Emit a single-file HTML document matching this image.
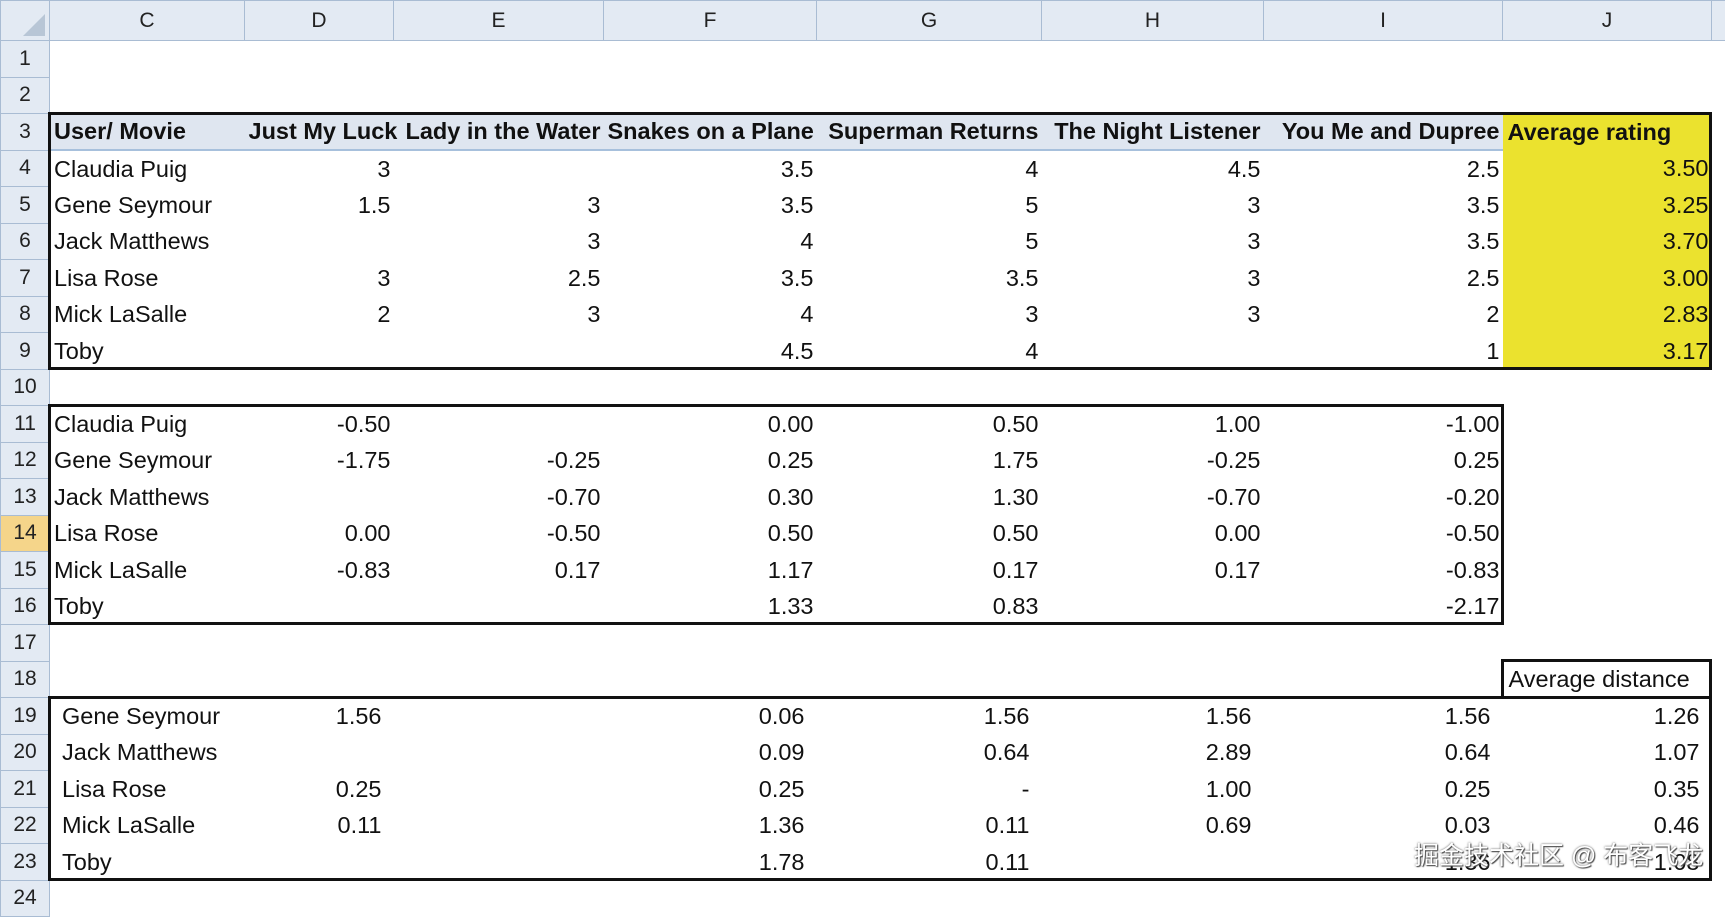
<!DOCTYPE html>
<html><head><meta charset="utf-8">
<style>
body{margin:0;width:1725px;height:889px;overflow:hidden;background:#fff;font-family:"Liberation Sans",Arial,sans-serif;position:relative}
table{border-collapse:collapse;table-layout:fixed;position:absolute;left:0;top:0;width:1725px}
td{padding:0 3px 0 4px;font-size:23.5px;color:#111;white-space:nowrap;overflow:visible;border:none;line-height:24px}
tr.r{height:36.5px}
td.h{background:#e3eaf3;border:1px solid #a9bcd3;text-align:center;color:#222;font-size:21px;padding:0}
tr.ch{height:40px}
.n{text-align:right}
.b{font-weight:bold}
tr.hd td.hb{background:#dfe6f0;border-bottom:2px solid #a7c0dc}
td.y, tr.hd td.y{background:#ebe22e}
.box{position:absolute;border:3px solid #111;box-sizing:border-box}
.in{padding-left:12px}
.nr{text-align:right;padding-right:12px}
.wm{position:absolute;left:1414px;top:836px;font-size:25px;color:#fff;font-family:"Liberation Sans","Noto Sans CJK SC",sans-serif;text-shadow:0 0 2px #555,1px 1px 1px #444}
</style></head><body>
<table>
<colgroup><col style="width:49px"><col style="width:195px"><col style="width:149px"><col style="width:210px"><col style="width:213px"><col style="width:225px"><col style="width:222px"><col style="width:239px"><col style="width:209px"><col style="width:14px"></colgroup>
<tr class="ch"><td class="h" style="position:relative"><div style="position:absolute;right:4px;bottom:4px;width:0;height:0;border-left:22px solid transparent;border-bottom:22px solid #b8c6d6"></div></td><td class="h">C</td><td class="h">D</td><td class="h">E</td><td class="h">F</td><td class="h">G</td><td class="h">H</td><td class="h">I</td><td class="h">J</td><td class="h"></td></tr>
<tr class="r"><td class="h">1</td><td colspan="9"></td></tr>
<tr class="r"><td class="h">2</td><td colspan="9"></td></tr>
<tr class="r hd"><td class="h">3</td><td class="b hb">User/ Movie</td><td class="b n hb">Just My Luck</td><td class="b n hb">Lady in the Water</td><td class="b n hb">Snakes on a Plane</td><td class="b n hb">Superman Returns</td><td class="b n hb">The Night Listener</td><td class="b n hb">You Me and Dupree</td><td class="b y" style="padding-left:5px">Average rating</td><td></td></tr>
<tr class="r"><td class="h">4</td><td>Claudia Puig</td><td class="n">3</td><td></td><td class="n">3.5</td><td class="n">4</td><td class="n">4.5</td><td class="n">2.5</td><td class="n y">3.50</td><td></td></tr>
<tr class="r"><td class="h">5</td><td>Gene Seymour</td><td class="n">1.5</td><td class="n">3</td><td class="n">3.5</td><td class="n">5</td><td class="n">3</td><td class="n">3.5</td><td class="n y">3.25</td><td></td></tr>
<tr class="r"><td class="h">6</td><td>Jack Matthews</td><td></td><td class="n">3</td><td class="n">4</td><td class="n">5</td><td class="n">3</td><td class="n">3.5</td><td class="n y">3.70</td><td></td></tr>
<tr class="r"><td class="h">7</td><td>Lisa Rose</td><td class="n">3</td><td class="n">2.5</td><td class="n">3.5</td><td class="n">3.5</td><td class="n">3</td><td class="n">2.5</td><td class="n y">3.00</td><td></td></tr>
<tr class="r"><td class="h">8</td><td>Mick LaSalle</td><td class="n">2</td><td class="n">3</td><td class="n">4</td><td class="n">3</td><td class="n">3</td><td class="n">2</td><td class="n y">2.83</td><td></td></tr>
<tr class="r"><td class="h">9</td><td>Toby</td><td></td><td></td><td class="n">4.5</td><td class="n">4</td><td></td><td class="n">1</td><td class="n y">3.17</td><td></td></tr>
<tr class="r"><td class="h">10</td><td colspan="9"></td></tr>
<tr class="r"><td class="h">11</td><td>Claudia Puig</td><td class="n">-0.50</td><td></td><td class="n">0.00</td><td class="n">0.50</td><td class="n">1.00</td><td class="n">-1.00</td><td></td><td></td></tr>
<tr class="r"><td class="h">12</td><td>Gene Seymour</td><td class="n">-1.75</td><td class="n">-0.25</td><td class="n">0.25</td><td class="n">1.75</td><td class="n">-0.25</td><td class="n">0.25</td><td></td><td></td></tr>
<tr class="r"><td class="h">13</td><td>Jack Matthews</td><td></td><td class="n">-0.70</td><td class="n">0.30</td><td class="n">1.30</td><td class="n">-0.70</td><td class="n">-0.20</td><td></td><td></td></tr>
<tr class="r"><td class="h" style="background:#f5d58a">14</td><td>Lisa Rose</td><td class="n">0.00</td><td class="n">-0.50</td><td class="n">0.50</td><td class="n">0.50</td><td class="n">0.00</td><td class="n">-0.50</td><td></td><td></td></tr>
<tr class="r"><td class="h">15</td><td>Mick LaSalle</td><td class="n">-0.83</td><td class="n">0.17</td><td class="n">1.17</td><td class="n">0.17</td><td class="n">0.17</td><td class="n">-0.83</td><td></td><td></td></tr>
<tr class="r"><td class="h">16</td><td>Toby</td><td></td><td></td><td class="n">1.33</td><td class="n">0.83</td><td></td><td class="n">-2.17</td><td></td><td></td></tr>
<tr class="r"><td class="h">17</td><td colspan="9"></td></tr>
<tr class="r"><td class="h">18</td><td colspan="7"></td><td style="padding-left:6px">Average distance</td><td></td></tr>
<tr class="r"><td class="h">19</td><td class="in">Gene Seymour</td><td class="nr">1.56</td><td></td><td class="nr">0.06</td><td class="nr">1.56</td><td class="nr">1.56</td><td class="nr">1.56</td><td class="nr">1.26</td><td></td></tr>
<tr class="r"><td class="h">20</td><td class="in">Jack Matthews</td><td></td><td></td><td class="nr">0.09</td><td class="nr">0.64</td><td class="nr">2.89</td><td class="nr">0.64</td><td class="nr">1.07</td><td></td></tr>
<tr class="r"><td class="h">21</td><td class="in">Lisa Rose</td><td class="nr">0.25</td><td></td><td class="nr">0.25</td><td class="nr">-</td><td class="nr">1.00</td><td class="nr">0.25</td><td class="nr">0.35</td><td></td></tr>
<tr class="r"><td class="h">22</td><td class="in">Mick LaSalle</td><td class="nr">0.11</td><td></td><td class="nr">1.36</td><td class="nr">0.11</td><td class="nr">0.69</td><td class="nr">0.03</td><td class="nr">0.46</td><td></td></tr>
<tr class="r"><td class="h">23</td><td class="in">Toby</td><td></td><td></td><td class="nr">1.78</td><td class="nr">0.11</td><td></td><td class="nr">1.36</td><td class="nr">1.08</td><td></td></tr>
<tr class="r"><td class="h">24</td><td colspan="9"></td></tr>
</table>
<div class="box" style="left:48px;top:112px;width:1664px;height:258px"></div>
<div class="box" style="left:48px;top:404px;width:1456px;height:221px"></div>
<div class="box" style="left:1501px;top:659px;width:211px;height:40px"></div>
<div class="box" style="left:48px;top:696px;width:1664px;height:185px"></div>
<div class="wm">掘金技术社区 @ 布客飞龙</div>
</body></html>
